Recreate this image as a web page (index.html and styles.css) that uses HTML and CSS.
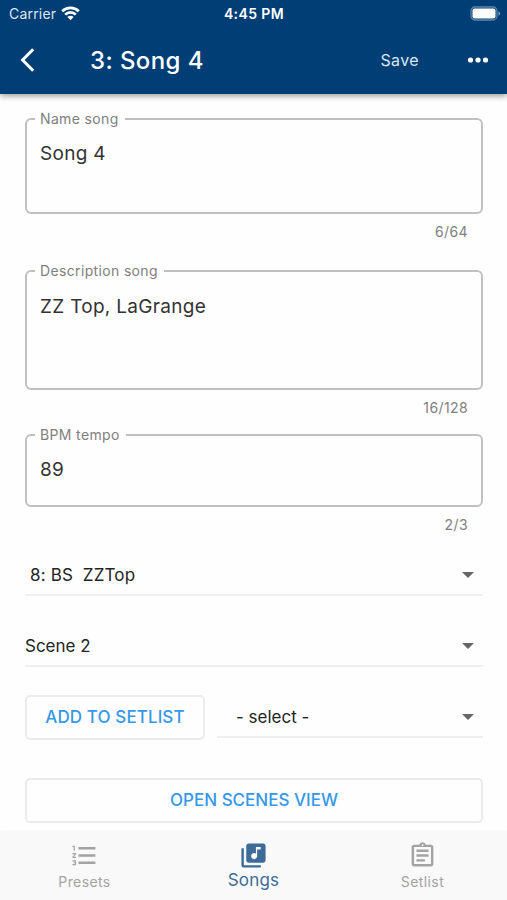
FILE: index.html
```html
<!DOCTYPE html>
<html lang="en">
<head>
  <meta charset="UTF-8">
  <title>Song 4</title>
  <link rel="stylesheet" href="styles.css">
</head>
<body>
  <header class="header">
    <div class="status-bar">
      <div class="carrier">
        <span>Carrier</span>
        <svg width="19" height="15" viewBox="0 0 19 15" fill="none" stroke="#fff" stroke-width="2.7">
          <path d="M1.2 5.2a12 12 0 0 1 16.6 0"/>
          <path d="M4.200 8.600a7.600 7.600 0 0 1 10.600 0"/>
          <path d="M9.500 14.200L6.400 11a4.400 4.400 0 0 1 6.200 0z" fill="#fff" stroke="none"/>
        </svg>
      </div>
      <div class="time">4:45 PM</div>
      <div class="battery">
        <svg width="31" height="15" viewBox="0 0 31 15">
          <rect x="1" y="1" width="26" height="13" rx="4" fill="none" stroke="#5f86aa" stroke-width="1.300"/>
          <rect x="2.500" y="2.500" width="23" height="10" rx="2" fill="#fff"/>
          <path d="M28.500 5.200q1.700.8 1.700 2.300t-1.700 2.300z" fill="#7f9fbc"/>
        </svg>
      </div>
    </div>
    <nav class="toolbar">
      <svg class="back" width="18" height="24" viewBox="0 0 18 24" fill="none" stroke="#fff" stroke-width="3">
        <path d="M14.200 1.200L3.600 12l10.600 10.800"/>
      </svg>
      <h1 class="title">3: Song 4</h1>
      <span class="save">Save</span>
      <svg class="more" width="22" height="6" viewBox="0 0 22 6" fill="#fff">
        <circle cx="3.500" cy="3" r="2.600"/>
        <circle cx="11" cy="3" r="2.600"/>
        <circle cx="18.500" cy="3" r="2.600"/>
      </svg>
    </nav>
  </header>

  <main class="content">
    <fieldset class="field field-name">
      <legend>Name song</legend>
      <div class="value">Song 4</div>
    </fieldset>
    <div class="counter">6/64</div>

    <fieldset class="field field-desc">
      <legend>Description song</legend>
      <div class="value">ZZ Top, LaGrange</div>
    </fieldset>
    <div class="counter">16/128</div>

    <fieldset class="field field-bpm">
      <legend>BPM tempo</legend>
      <div class="value">89</div>
    </fieldset>
    <div class="counter">2/3</div>

    <div class="select select-preset"><span>8: BS&nbsp; ZZTop</span><i class="arrow"></i></div>
    <div class="select select-scene"><span>Scene 2</span><i class="arrow"></i></div>

    <div class="setlist-row">
      <div class="btn btn-add">ADD TO SETLIST</div>
      <div class="select select-setlist"><span>- select -</span><i class="arrow"></i></div>
    </div>

    <div class="btn btn-scenes">OPEN SCENES VIEW</div>
  </main>

  <footer class="tabs">
    <div class="tab">
      <svg width="29" height="29" viewBox="0 0 24 24" fill="currentColor">
        <path d="M2 17h2v.5H3v1h1v.5H2v1h3v-4H2v1zm1-9h1V4H2v1h1v3zm-1 3h1.800L2 13.100v.9h3v-1H3.200L5 10.900V10H2v1zm5-6v2h14V5H7zm0 14h14v-2H7v2zm0-6h14v-2H7v2z"/>
      </svg>
      <span>Presets</span>
    </div>
    <div class="tab active">
      <svg width="29" height="29" viewBox="0 0 24 24" fill="currentColor">
        <path d="M20 2H8c-1.100 0-2 .9-2 2v12c0 1.100.9 2 2 2h12c1.100 0 2-.9 2-2V4c0-1.100-.9-2-2-2zm-2 5h-3v5.500c0 1.380-1.120 2.500-2.500 2.500S10 13.880 10 12.500s1.120-2.500 2.500-2.500c.57 0 1.080.19 1.500.51V5h4v2zM4 6H2v14c0 1.100.9 2 2 2h14v-2H4V6z"/>
      </svg>
      <span>Songs</span>
    </div>
    <div class="tab">
      <svg width="29" height="29" viewBox="0 0 24 24" fill="currentColor">
        <path d="M7 15h7v2H7zm0-4h10v2H7zm0-4h10v2H7zm12-4h-4.180C14.400 1.840 13.300 1 12 1s-2.400.84-2.820 2H5c-1.100 0-2 .9-2 2v14c0 1.100.9 2 2 2h14c1.100 0 2-.9 2-2V5c0-1.100-.9-2-2-2zm-7-.25c.41 0 .75.34.75.75s-.34.75-.75.75-.75-.34-.75-.75.34-.75.75-.75zM19 19H5V5h14v14z"/>
      </svg>
      <span>Setlist</span>
    </div>
  </footer>
</body>
</html>
```
FILE: styles.css
```css
* {
  box-sizing: border-box;
}
body {
  margin: 0;
  height: 900px;
  display: flex;
  flex-direction: column;
  overflow: hidden;
  background: #fefefe;
  color: #212121;
  font-family: Inter, "Liberation Sans", sans-serif;
}
.header {
  height: 94px;
  flex: none;
  background: #003e75;
  color: #fff;
  box-shadow: 0 2px 6px rgba(0, 0, 0, 0.4);
}
.status-bar {
  height: 27px;
  padding: 0 6px 0 9px;
  display: grid;
  grid-template-columns: 1fr auto 1fr;
  align-items: center;
  font-size: 14px;
}
.carrier {
  display: flex;
  align-items: center;
  gap: 5px;
  color: #dbe6f0;
  letter-spacing: 0.2px;
}
.time {
  margin-right: 2px;
  font-weight: 600;
  letter-spacing: 0.4px;
}
.battery {
  display: flex;
  justify-content: flex-end;
}
.toolbar {
  height: 66px;
  padding: 0 18px 0 19px;
  display: flex;
  align-items: center;
}
.title {
  flex: 1;
  margin: 0 0 0 53px;
  font-size: 24px;
  font-weight: 450;
  letter-spacing: 0.4px;
}
.save {
  margin: -1px 48px 0 0;
  color: #dbe6f0;
  font-size: 16px;
  letter-spacing: 0.4px;
}
.content {
  flex: 1;
  padding: 17px 24px 0 25px;
}
.field {
  margin: 0;
  padding: 0 13px 0 8px;
  border: 2px solid #c0c0c0;
  border-radius: 6px;
}
.field legend {
  height: 16px;
  padding: 0 6px 0 5px;
  color: #808080;
  font-size: 14px;
  line-height: 16px;
  letter-spacing: 0.35px;
}
.field .value {
  padding: 15px 0 0 5px;
  color: #333;
  font-size: 19px;
  line-height: 24px;
  letter-spacing: 0.3px;
}
.field-name {
  height: 103px;
}
.field-desc {
  height: 127px;
}
.field-desc .value {
  padding-top: 16px;
}
.field-bpm {
  height: 80px;
}
.counter {
  height: 37px;
  padding-right: 15px;
  color: #808080;
  font-size: 14px;
  line-height: 35px;
  letter-spacing: 0.4px;
  text-align: right;
}
.field-name + .counter {
  margin-bottom: 12px;
}
.select {
  display: flex;
  justify-content: space-between;
  align-items: center;
  padding-right: 9px;
  border-bottom: 2px solid #f0f0f0;
  color: #242424;
  font-size: 17px;
}
.select-preset {
  height: 41px;
  margin-top: 11px;
  padding-left: 5px;
  letter-spacing: 0.15px;
}
.select-scene {
  height: 41px;
  margin-top: 30px;
}
.arrow {
  border: 6px solid transparent;
  border-top: 6px solid #666;
  border-bottom: none;
}
.setlist-row {
  display: flex;
  gap: 12px;
  margin-top: 28px;
}
.select-setlist {
  flex: 1;
  height: 43px;
  padding: 2px 9px 0 19px;
}
.btn {
  height: 45px;
  padding-bottom: 2px;
  display: flex;
  align-items: center;
  justify-content: center;
  border: 2px solid #ebebeb;
  border-radius: 5px;
  color: #3598e8;
  font-size: 17px;
  font-weight: 500;
}
.btn-add {
  width: 180px;
  letter-spacing: 0.1px;
}
.btn-scenes {
  margin-top: 38px;
}
.tabs {
  height: 68px;
  flex: none;
  display: flex;
  background: #f9f9f9;
  box-shadow: 0 -1px 3px rgba(0, 0, 0, 0.03);
}
.tab {
  flex: 1;
  display: flex;
  flex-direction: column;
  align-items: center;
  padding-top: 9px;
  color: #a3a3a3;
  font-size: 14px;
  line-height: 24px;
  letter-spacing: 0.4px;
}
.tab.active {
  color: #3d6c98;
  font-size: 17px;
  line-height: 21px;
  letter-spacing: 0.2px;
}
```
